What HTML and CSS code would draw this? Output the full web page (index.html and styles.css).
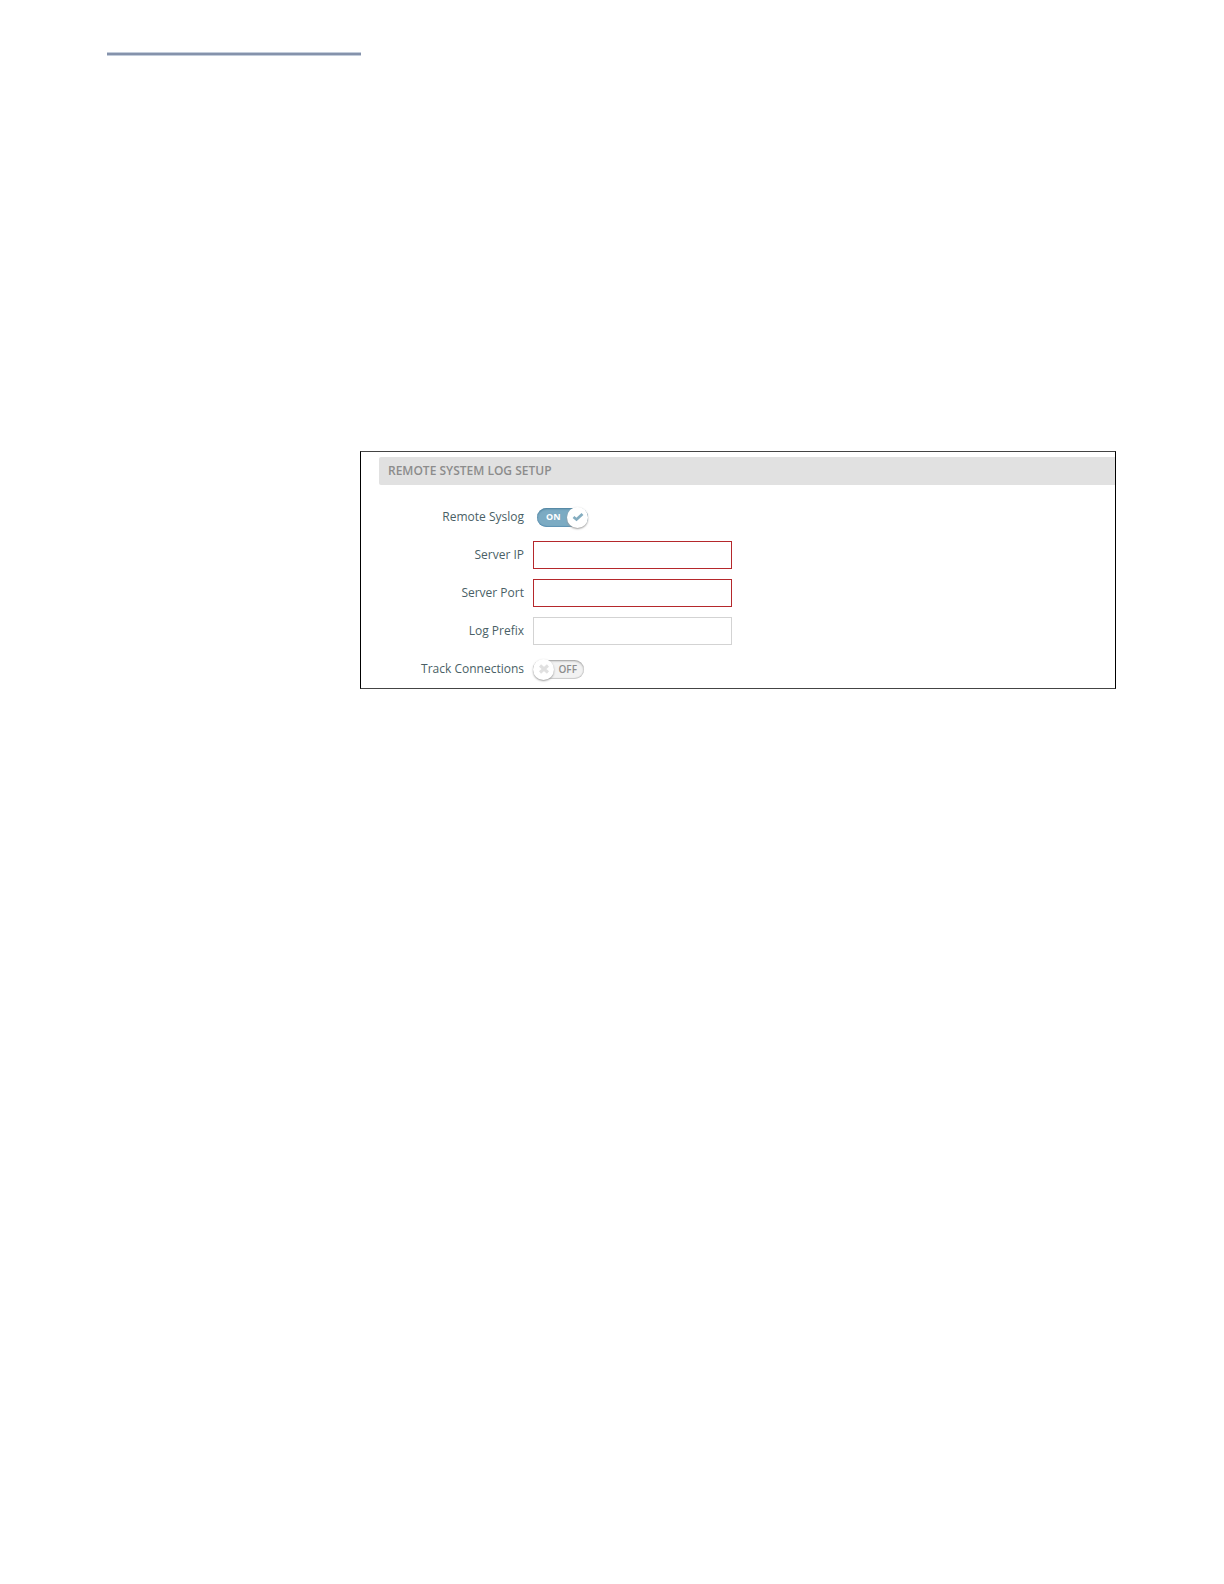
FILE: index.html
```
<!DOCTYPE html>
<html lang="en">
<head>
    <meta charset="UTF-8">
    <meta name="viewport" content="width=device-width, initial-scale=1.0">
    <title>Remote System Log Setup</title>
    <link rel="stylesheet" href="styles.css">
</head>
<body>
    <div class="page">
        <hr class="page-rule">
        <form class="panel">
            <h2 class="panel-title">REMOTE SYSTEM LOG SETUP</h2>
            <div class="fields">
                <div class="row">
                    <label for="remote-syslog">Remote Syslog</label>
                    <div class="switch switch-on">
                        <input type="checkbox" id="remote-syslog" checked>
                        <span class="switch-text">ON</span>
                        <span class="knob">
                            <svg width="12" height="10" viewBox="0 0 12 10"><path d="M1.5 5 L4.5 7.5 L10.5 2" fill="none" stroke="#84adc0" stroke-width="2.8"/></svg>
                        </span>
                    </div>
                </div>
                <div class="row">
                    <label for="server-ip">Server IP</label>
                    <input type="text" id="server-ip" class="text-input required">
                </div>
                <div class="row">
                    <label for="server-port">Server Port</label>
                    <input type="text" id="server-port" class="text-input required">
                </div>
                <div class="row">
                    <label for="log-prefix">Log Prefix</label>
                    <input type="text" id="log-prefix" class="text-input">
                </div>
                <div class="row">
                    <label for="track-connections">Track Connections</label>
                    <div class="switch switch-off">
                        <input type="checkbox" id="track-connections">
                        <span class="knob">
                            <svg width="10" height="10" viewBox="0 0 10 10"><path d="M1 1.5 L9 8.5 M9 1.5 L1 8.5" fill="none" stroke="#e0e0e0" stroke-width="3.2"/></svg>
                        </span>
                        <span class="switch-text">OFF</span>
                    </div>
                </div>
            </div>
        </form>
    </div>
</body>
</html>
```
FILE: styles.css
```
* {
    box-sizing: border-box;
}

body {
    margin: 0;
    background-color: #fff;
    color: #4a5f66;
    font-family: "Open Sans", sans-serif;
    font-size: 12px;
    line-height: 16px;
}

.page {
    padding: 52px 108px 52px 107px;
}

.page-rule {
    width: 254px;
    height: 4px;
    margin: 0;
    border: 1px solid #c3cddb;
    border-width: 1px 0;
    background-color: #8592ab;
}

.panel {
    margin: 395px 0 0 253px;
    padding: 5px 0 5px 18px;
    border: 1px solid #000;
    border-top-color: #444;
    border-bottom-color: #444;
}

.panel-title {
    margin: 0;
    padding: 6px 9px;
    border-radius: 2px 0 0 2px;
    background-color: #e1e1e1;
    color: #8c8c8c;
    font-size: 12px;
    font-weight: 600;
    line-height: 16px;
}

.fields {
    display: grid;
    gap: 10px;
    padding-top: 18px;
}

.row {
    display: grid;
    grid-template-columns: 145px 199px;
    column-gap: 9px;
    align-items: center;
    height: 28px;
}

.row label {
    padding-bottom: 1px;
    text-align: right;
}

.text-input {
    width: 100%;
    height: 28px;
    padding: 0 8px;
    border: 1px solid #d3d3d3;
    background-color: #fff;
    font: inherit;
    color: inherit;
}

.text-input.required {
    border-color: #b5282c;
}

/* toggle switches */
.switch {
    position: relative;
    display: flex;
    align-items: center;
    justify-content: space-between;
    width: 51px;
    height: 19px;
    border-radius: 10px;
    font-size: 10px;
    font-weight: 600;
}

.switch input {
    position: absolute;
    inset: 0;
    z-index: 1;
    width: 100%;
    height: 100%;
    margin: 0;
    opacity: 0;
    cursor: pointer;
}

.switch-on {
    margin-left: 4px;
    padding-left: 9px;
    background-color: #7cabc3;
    box-shadow: inset 0 1px 2px #4b7f9c, inset 0 -1px 1px #5f94b5;
    color: #fff;
    font-size: 9px;
    font-weight: 700;
}

.switch-off {
    padding-right: 7px;
    background-color: #f2f2f2;
    box-shadow: inset 0 1px 2px #999, inset 0 -1px 1px #ccc;
    color: #8c8c8c;
}

.knob {
    display: flex;
    align-items: center;
    justify-content: center;
    width: 21px;
    height: 21px;
    border-radius: 50%;
    background-color: #fff;
    box-shadow: 0 1px 2px #999;
}
```
